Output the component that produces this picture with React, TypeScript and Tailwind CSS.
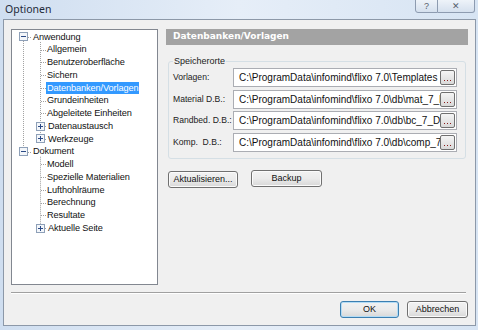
import type { ReactNode } from 'react'

const ROW = 12.75

type TreeItem = { label: string; level: 0 | 1; box?: '+' | '-'; selected?: boolean }

const tree: TreeItem[] = [
  { label: 'Anwendung', level: 0, box: '-' },
  { label: 'Allgemein', level: 1 },
  { label: 'Benutzeroberfläche', level: 1 },
  { label: 'Sichern', level: 1 },
  { label: 'Datenbanken/Vorlagen', level: 1, selected: true },
  { label: 'Grundeinheiten', level: 1 },
  { label: 'Abgeleitete Einheiten', level: 1 },
  { label: 'Datenaustausch', level: 1, box: '+' },
  { label: 'Werkzeuge', level: 1, box: '+' },
  { label: 'Dokument', level: 0, box: '-' },
  { label: 'Modell', level: 1 },
  { label: 'Spezielle Materialien', level: 1 },
  { label: 'Lufthohlräume', level: 1 },
  { label: 'Berechnung', level: 1 },
  { label: 'Resultate', level: 1 },
  { label: 'Aktuelle Seite', level: 1, box: '+' },
]

const paths = [
  { label: 'Vorlagen:', value: 'C:\\ProgramData\\infomind\\flixo 7.0\\Templates' },
  { label: 'Material D.B.:', value: 'C:\\ProgramData\\infomind\\flixo 7.0\\db\\mat_7_DE.mdb' },
  { label: 'Randbed. D.B.:', value: 'C:\\ProgramData\\infomind\\flixo 7.0\\db\\bc_7_DE.mdb' },
  { label: 'Komp.  D.B.:', value: 'C:\\ProgramData\\infomind\\flixo 7.0\\db\\comp_7_DE.mdb' },
]

export default function App() {
  return (
    <div className="w-[478px] h-[330px] flex flex-col overflow-hidden bg-gradient-to-r from-[#cfdef0] via-[#e6eef8] to-[#d7e4f3] font-['Liberation_Sans',Arial,sans-serif] text-black">
      {/* title bar */}
      <div className="relative h-[19px] shrink-0">
        <span className="absolute left-[5px] top-[2px] text-[10.5px] leading-[14px] text-[#1e2a3a] font-['Noto_Sans',sans-serif]">Optionen</span>
        <div className="absolute top-[-1px] left-[415px] flex">
          <CaptionButton className="w-[23px] rounded-bl-[3px]">?</CaptionButton>
          <CaptionButton className="w-[37px] rounded-br-[3px] border-l-0">✕</CaptionButton>
        </div>
      </div>

      {/* client area */}
      <div className="ml-[3px] w-[473px] h-[307px] shrink-0 border border-[#8c98a8] bg-[#f0f0f0] flex flex-col">
        <div className="flex pl-[7px] pt-[9px]">
          <TreeView />

          <div className="ml-[8px] w-[302px] flex flex-col items-start">
            <div className="w-[302px] h-[16px] bg-[#a3a3a3] pl-[7px] flex items-center">
              <span className="text-white font-bold text-[9px] font-['DejaVu_Sans',sans-serif]">Datenbanken/Vorlagen</span>
            </div>

            {/* Speicherorte group */}
            <div className="relative ml-[2px] mt-[16px] w-[298px] h-[98px] border border-[#d5dfe5] rounded-[3px] pt-[6px] pl-[4px]">
              <span className="absolute left-[4px] top-[-7px] bg-[#f0f0f0] px-[1px] text-[9px] leading-[12px] text-[#222]">Speicherorte</span>
              <div className="flex flex-col gap-[2.5px]">
                {paths.map((p) => (
                  <div key={p.label} className="flex items-center h-[19px]">
                    <span className="w-[60px] text-[8.6px] text-[#222] whitespace-pre">{p.label}</span>
                    <div className="w-[224px] h-[19px] bg-white border border-[#abadb3] flex items-center">
                      <span className="flex-1 overflow-hidden whitespace-nowrap pl-[5px] text-[10px] leading-[17px] text-[#111]">{p.value}</span>
                      <DotsButton />
                    </div>
                  </div>
                ))}
              </div>
            </div>

            <div className="flex mt-[12px] ml-[2px] gap-[13px]">
              <WinButton className="w-[70px]">Aktualisieren...</WinButton>
              <WinButton className="w-[71px] mt-[-1px]">Backup</WinButton>
            </div>
          </div>
        </div>

        {/* separator */}
        <div className="ml-[7px] mt-[7px] w-[455px] border-t border-[#a0a0a0] border-b border-b-white" />

        <div className="flex justify-end pr-[7px] mt-[7px] gap-[8px]">
          <WinButton className="w-[59px] h-[16px]" primary>OK</WinButton>
          <WinButton className="w-[61px] h-[16px]">Abbrechen</WinButton>
        </div>
      </div>
    </div>
  )
}

function CaptionButton({ className, children }: { className: string; children: ReactNode }) {
  return (
    <div className={`h-[14px] border border-[#8d9bb0] bg-gradient-to-b from-[#eef3f9] to-[#d5e0ee] flex items-center justify-center text-[9px] leading-none text-[#56606c] ${className}`}>
      {children}
    </div>
  )
}

function WinButton({ className, primary, children }: { className: string; primary?: boolean; children: ReactNode }) {
  const border = primary ? 'border-[#3c7fb1] shadow-[inset_0_0_0_1px_#b4dcf5]' : 'border-[#707070] shadow-[inset_0_0_0_1px_#fbfbfb]'
  return (
    <div className={`h-[17px] shrink-0 rounded-[3px] border ${border} bg-gradient-to-b from-[#f2f2f2] via-[#ebebeb] to-[#d8d8d8] flex items-center justify-center text-[9px] text-[#111] ${className}`}>
      {children}
    </div>
  )
}

function DotsButton() {
  return (
    <div className="w-[15px] h-[15px] mr-[1px] shrink-0 rounded-[2px] border border-[#707070] bg-gradient-to-b from-[#f5f5f5] to-[#d9d9d9] flex items-end justify-center pb-[3px]">
      <svg width="7" height="1" viewBox="0 0 7 1">
        <rect x="0" y="0" width="1" height="1" fill="#8a1c1c" />
        <rect x="3" y="0" width="1" height="1" fill="#8a1c1c" />
        <rect x="6" y="0" width="1" height="1" fill="#8a1c1c" />
      </svg>
    </div>
  )
}

function ExpandBox({ sign }: { sign: '+' | '-' }) {
  return (
    <svg width="9" height="9" viewBox="0 0 9 9" className="shrink-0">
      <rect x="0.5" y="0.5" width="8" height="8" fill="#f3f6fa" stroke="#8ea0b8" />
      <rect x="2" y="4" width="5" height="1" fill="#2b4a86" />
      {sign === '+' && <rect x="4" y="2" width="1" height="5" fill="#2b4a86" />}
    </svg>
  )
}

function TreeView() {
  const cy = (i: number) => 0.6 + ROW / 2 + ROW * i
  const dot = { stroke: '#a0a0a0', strokeWidth: 1, strokeDasharray: '1 1' }
  return (
    <div className="relative w-[147px] h-[256px] shrink-0 bg-white border border-[#828790] pt-[0.6px]">
      {/* connector lines */}
      <svg className="absolute left-0 top-0" width="145" height="254">
        <line x1="11.5" y1={cy(0)} x2="11.5" y2={cy(9)} {...dot} />
        <line x1="28.5" y1={cy(0) + 5} x2="28.5" y2={cy(8)} {...dot} />
        <line x1="28.5" y1={cy(9) + 5} x2="28.5" y2={cy(15)} {...dot} />
        {[0, 9].map((i) => (
          <line key={i} x1="16" y1={Math.round(cy(i)) + 0.5} x2="19" y2={Math.round(cy(i)) + 0.5} {...dot} />
        ))}
        {tree.map((t, i) =>
          t.level === 1 && !t.box ? (
            <line key={i} x1="29" y1={Math.round(cy(i)) + 0.5} x2="34" y2={Math.round(cy(i)) + 0.5} {...dot} />
          ) : null
        )}
        {[7, 8, 15].map((i) => (
          <line key={'b' + i} x1="33" y1={Math.round(cy(i)) + 0.5} x2="34" y2={Math.round(cy(i)) + 0.5} {...dot} />
        ))}
      </svg>
      <div className="relative flex flex-col">
        {tree.map((t) => (
          <div
            key={t.label}
            className={`flex items-center h-[12.75px] ${t.level === 0 ? 'pl-[7px]' : t.box ? 'pl-[24px]' : 'pl-[34px]'}`}
          >
            {t.box && <ExpandBox sign={t.box} />}
            <span
              className={`${t.level === 0 ? 'ml-[4px]' : t.box ? 'ml-[2px]' : ''} px-[1px] h-[12.75px] leading-[12.75px] text-[9.2px] tracking-[-0.1px] whitespace-nowrap ${
                t.selected ? 'bg-[#3399ff] text-white' : 'text-[#111]'
              }`}
            >
              {t.label}
            </span>
          </div>
        ))}
      </div>
    </div>
  )
}
